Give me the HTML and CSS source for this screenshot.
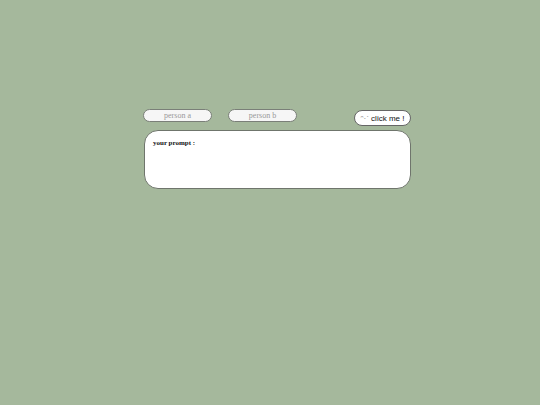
FILE: index.html
```html
<!DOCTYPE html>
<html>
<head>
<meta charset="utf-8">
<link rel="stylesheet" href="styles.css">
</head>
<body>
<div class="wrap">
  <div class="toprow">
    <input class="person" type="text" placeholder="person a">
    <input class="person" type="text" placeholder="person b">
    <button class="click"><span class="face">ᵔ·ˊ</span> click me !</button>
  </div>
  <div class="prompt">
    <div class="label">your prompt :</div>
  </div>
</div>
</body>
</html>
```
FILE: styles.css
```css
html, body {
  margin: 0;
  padding: 0;
  background: #a5b89c;
  width: 540px;
  height: 405px;
}
.wrap {
  margin-left: 143px;
  padding-top: 109px;
  width: 268px;
}
.toprow {
  display: flex;
  align-items: flex-start;
  gap: 16px;
  height: 17px;
}
.person {
  box-sizing: border-box;
  width: 69px;
  height: 13px;
  margin: 0;
  padding: 0;
  border: 1px solid #7a7f78;
  border-radius: 7px;
  background: #f6f6f6;
  font-family: "Liberation Serif", serif;
  font-size: 8px;
  text-align: center;
  color: #777;
  outline: none;
}
.person::placeholder {
  color: #999;
}
.click {
  box-sizing: border-box;
  margin: 1px 0 0 auto;
  width: 57px;
  height: 16px;
  padding: 0;
  border: 1px solid #666;
  border-radius: 8px;
  background: #fff;
  font-family: "Liberation Sans", sans-serif;
  font-size: 8px;
  color: #111;
}
.face {
  color: #777;
}
.prompt {
  box-sizing: border-box;
  margin-top: 4px;
  margin-left: 1px;
  width: 267px;
  height: 59px;
  border: 1px solid #6f756c;
  border-radius: 14px;
  background: #fff;
  padding: 8px 8px;
}
.label {
  font-family: "Liberation Serif", serif;
  font-weight: bold;
  font-size: 7px;
  color: #111;
}
```
